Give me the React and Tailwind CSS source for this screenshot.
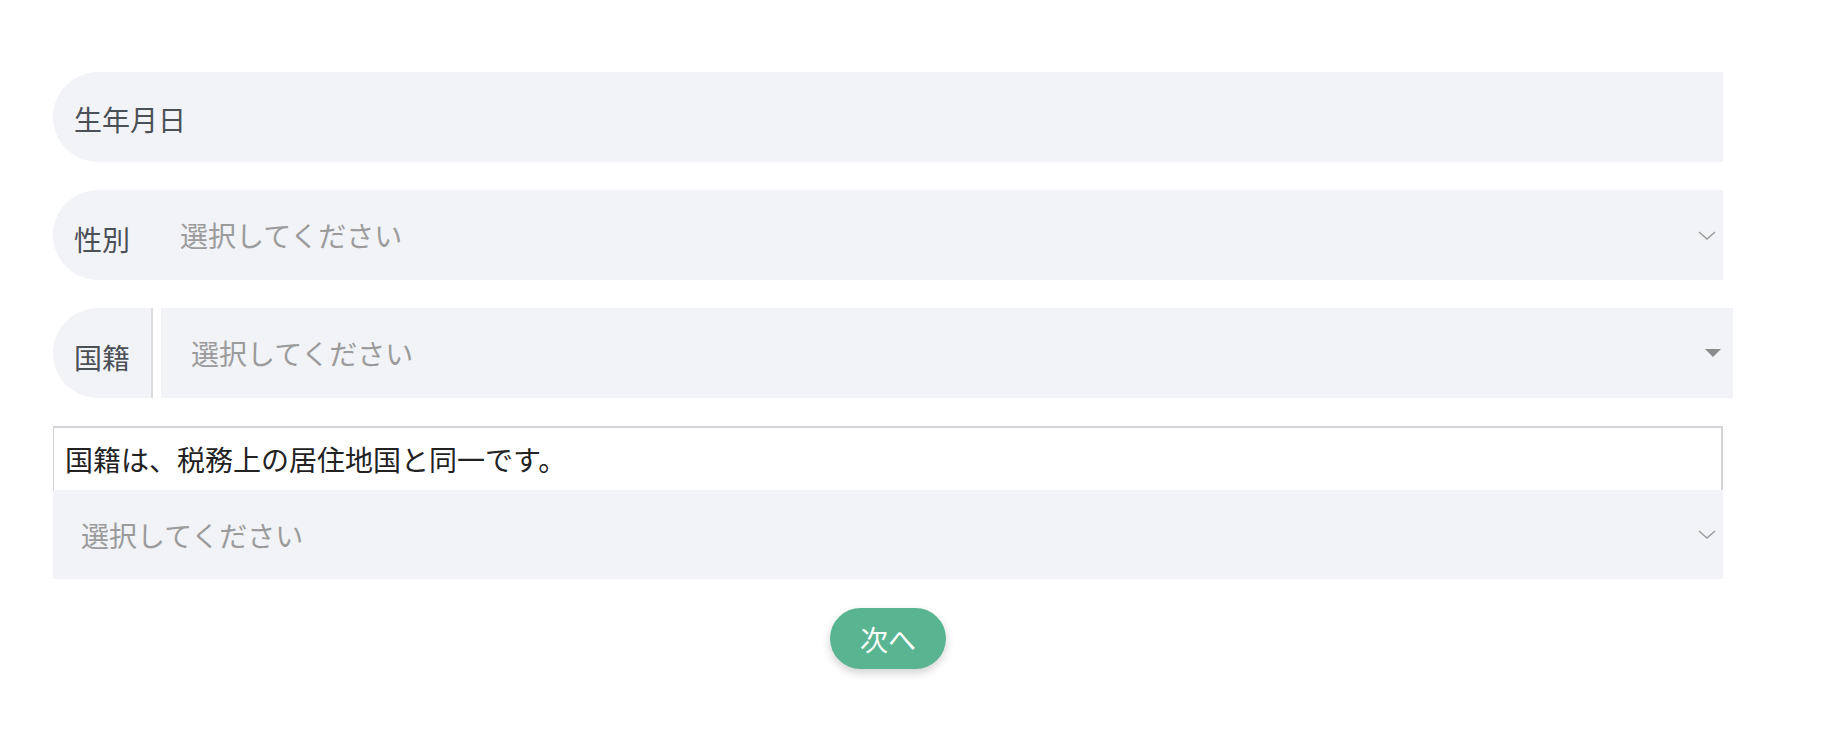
export default function App() {
  const font = { fontFamily: '"Noto Sans CJK JP", "Noto Sans", sans-serif' };

  const Chevron = () => (
    <svg width="18" height="9" viewBox="0 0 18 9" className="shrink-0">
      <path d="M1 1 L9 8 L17 1" fill="none" stroke="#9a9a9a" strokeWidth="1.4" />
    </svg>
  );

  return (
    <div className="min-h-[750px] bg-white pt-[72px] pl-[53px] text-[28px]" style={font}>
      <div className="w-[1670px] flex flex-col">
        {/* 生年月日 */}
        <div className="h-[90px] bg-[#f2f3f7] rounded-l-[45px] flex items-center pl-[21px] pt-[4px] text-[#4b4f56]">
          生年月日
        </div>

        {/* 性別 */}
        <div className="mt-[28px] h-[90px] bg-[#f2f3f7] rounded-l-[45px] flex items-center pl-[21px] pr-[7px]">
          <span className="text-[#4b4f56] pt-[8px] w-[106px]">性別</span>
          <span className="flex-1 text-[#9b9b9b]">選択してください</span>
          <Chevron />
        </div>

        {/* 国籍 */}
        <div className="mt-[28px] h-[90px] w-[1680px] flex">
          <div className="w-[100px] bg-[#f2f3f7] rounded-l-[45px] border-r-2 border-[#dcdcdf] flex items-center pl-[21px] pt-[8px] text-[#4b4f56]">
            国籍
          </div>
          <div className="ml-[8px] flex-1 bg-[#f2f3f7] flex items-center pl-[30px] pr-[12px] text-[#9b9b9b]">
            <span className="flex-1">選択してください</span>
            <svg width="16" height="8" viewBox="0 0 16 8">
              <path d="M0 0 L16 0 L8 8 Z" fill="#8c8c8c" />
            </svg>
          </div>
        </div>

        {/* 注記 + 選択 */}
        <div className="mt-[28px] h-[64px] border-2 border-b-0 border-l border-[#d3d4d8] flex items-center pl-[11px] text-[#222222]">
          国籍は、税務上の居住地国と同一です。
        </div>
        <div className="h-[89px] bg-[#f2f3f7] flex items-center pl-[28px] pr-[7px] text-[#9b9b9b]">
          <span className="flex-1">選択してください</span>
          <Chevron />
        </div>

        {/* 次へ */}
        <div className="mt-[29px] flex justify-center">
          <button className="w-[116px] h-[61px] rounded-full bg-[#59b591] text-white text-[28px] shadow-[0_4px_10px_rgba(0,0,0,0.18)]">
            次へ
          </button>
        </div>
      </div>
    </div>
  );
}
